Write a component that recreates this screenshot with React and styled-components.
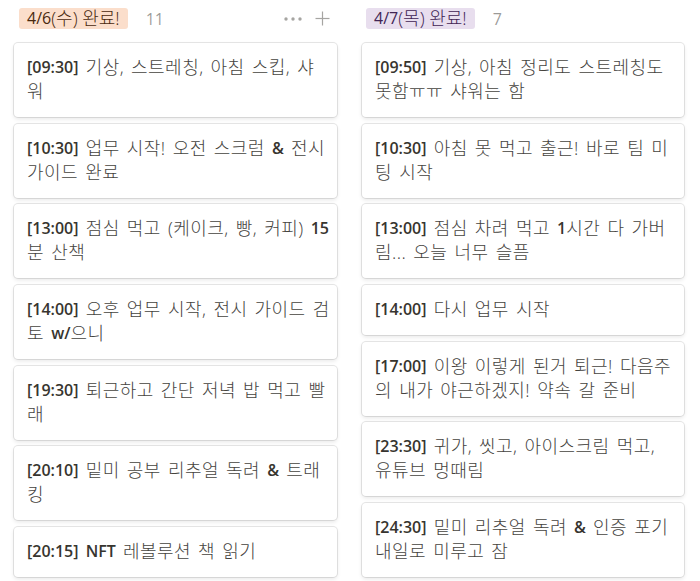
import React from "react";
import styled, { createGlobalStyle } from "styled-components";

const Global = createGlobalStyle`
  html, body { margin: 0; padding: 0; background: #ffffff; }
  body {
    font-family: "Open Sans", "Noto Sans CJK KR", sans-serif;
    color: #37352f;
    -webkit-font-smoothing: antialiased;
  }
`;

const Board = styled.div`
  display: flex;
  gap: 25px;
  padding-left: 14px;
  width: 700px;
  height: 581px;
  box-sizing: border-box;
  overflow: hidden;
`;

const Column = styled.div`
  display: flex;
  flex-direction: column;
  width: ${(p) => p.$width}px;
  flex: none;
`;

const Header = styled.div`
  display: flex;
  align-items: center;
  height: 37px;
  padding-left: ${(p) => p.$inset}px;
  padding-right: 7px;
  margin-bottom: 6px;
`;

const Badge = styled.span`
  display: inline-flex;
  align-items: center;
  height: 21px;
  padding: 0 8px;
  border-radius: 3px;
  font-size: 16px;
  line-height: 21px;
  white-space: nowrap;
  background: ${(p) => p.$bg};
  color: ${(p) => p.$fg};
`;

const Count = styled.span`
  margin-left: 18px;
  font-size: 16px;
  color: rgba(55, 53, 47, 0.5);
`;

const Actions = styled.div`
  margin-left: auto;
  display: flex;
  align-items: center;
  gap: 13px;
  color: #a6a5a2;
`;

const Cards = styled.div`
  display: flex;
  flex-direction: column;
  gap: 6.67px;
`;

const Card = styled.div`
  background: #fff;
  border-radius: 4px;
  box-shadow: rgba(15, 15, 15, 0.1) 0 0 0 1px, rgba(15, 15, 15, 0.1) 0 2px 4px;
  padding: 12px 12px 14px 13px;
  font-size: 16px;
  line-height: 24px;
`;

const Line = styled.div`
  white-space: nowrap;
  height: 24px;
`;

const Latin = styled.span`
  font-weight: ${(p) => (p.$plain ? 400 : 600)};
  font-size: 16px;
`;

const Hangul = styled.span`
  font-size: 18px;
  font-weight: 300;
  letter-spacing: ${(p) => (p.$plain ? 0 : 0.45)}px;
  word-spacing: ${(p) => (p.$plain ? 0 : 2)}px;
  vertical-align: top;
  line-height: ${(p) => (p.$plain ? 21 : 24)}px;
  color: ${(p) => (p.$plain ? "inherit" : "#45433e")};
`;

const LATIN = /([A-Za-z0-9\[\]:&\/]+)/;

function Rich({ text, plain }) {
  return text.split(LATIN).map((part, i) =>
    i % 2 === 1 ? (
      <Latin key={i} $plain={plain}>{part}</Latin>
    ) : (
      <Hangul key={i} $plain={plain}>{part}</Hangul>
    )
  );
}

const Dots = () => (
  <svg width="18" height="4" viewBox="0 0 18 4" fill="currentColor">
    <circle cx="2" cy="2" r="1.7" />
    <circle cx="9" cy="2" r="1.7" />
    <circle cx="16" cy="2" r="1.7" />
  </svg>
);

const Plus = () => (
  <svg width="15" height="15" viewBox="0 0 15 15" stroke="currentColor" strokeWidth="1.2" fill="none">
    <line x1="7.5" y1="0.5" x2="7.5" y2="14.5" />
    <line x1="0.5" y1="7.5" x2="14.5" y2="7.5" />
  </svg>
);

const columns = [
  {
    title: "4/6(수) 완료!",
    bg: "#fbdecb",
    fg: "#49290e",
    count: 11,
    width: 323,
    inset: 5,
    actions: true,
    cards: [
      ["[09:30] 기상, 스트레칭, 아침 스킵, 샤", "워"],
      ["[10:30] 업무 시작! 오전 스크럼 & 전시", "가이드 완료"],
      ["[13:00] 점심 먹고 (케이크, 빵, 커피) 15", "분 산책"],
      ["[14:00] 오후 업무 시작, 전시 가이드 검", "토 w/으니"],
      ["[19:30] 퇴근하고 간단 저녁 밥 먹고 빨", "래"],
      ["[20:10] 밑미 공부 리추얼 독려 & 트래", "킹"],
      ["[20:15] NFT 레볼루션 책 읽기"],
    ],
  },
  {
    title: "4/7(목) 완료!",
    bg: "#e8deee",
    fg: "#412454",
    count: 7,
    width: 322,
    inset: 4,
    actions: false,
    cards: [
      ["[09:50] 기상, 아침 정리도 스트레칭도", "못함ㅠㅠ 샤워는 함"],
      ["[10:30] 아침 못 먹고 출근! 바로 팀 미", "팅 시작"],
      ["[13:00] 점심 차려 먹고 1시간 다 가버", "림... 오늘 너무 슬픔"],
      ["[14:00] 다시 업무 시작"],
      ["[17:00] 이왕 이렇게 된거 퇴근! 다음주", "의 내가 야근하겠지! 약속 갈 준비"],
      ["[23:30] 귀가, 씻고, 아이스크림 먹고,", "유튜브 멍때림"],
      ["[24:30] 밑미 리추얼 독려 & 인증 포기", "내일로 미루고 잠"],
    ],
  },
];

export default function App() {
  return (
    <>
      <Global />
      <Board>
        {columns.map((col) => (
          <Column key={col.title} $width={col.width}>
            <Header $inset={col.inset}>
              <Badge $bg={col.bg} $fg={col.fg}>
                <Rich text={col.title} plain />
              </Badge>
              <Count>{col.count}</Count>
              {col.actions && (
                <Actions>
                  <Dots />
                  <Plus />
                </Actions>
              )}
            </Header>
            <Cards>
              {col.cards.map((lines, i) => (
                <Card key={i}>
                  {lines.map((l, j) => (
                    <Line key={j}>
                      <Rich text={l} />
                    </Line>
                  ))}
                </Card>
              ))}
            </Cards>
          </Column>
        ))}
      </Board>
    </>
  );
}
